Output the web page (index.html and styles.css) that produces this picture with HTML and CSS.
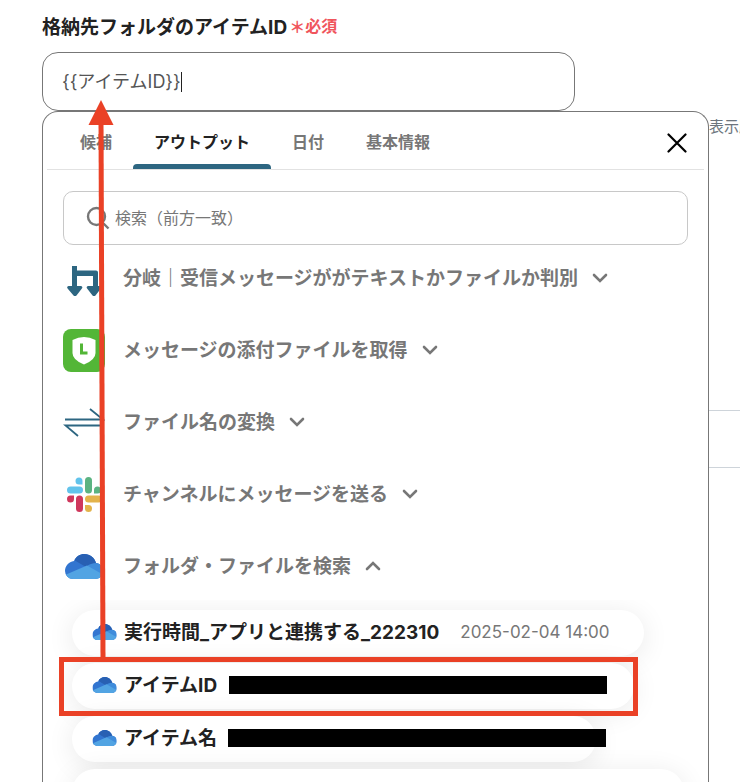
FILE: index.html
```html
<!DOCTYPE html>
<html lang="ja">
<head>
    <meta charset="UTF-8">
    <meta name="viewport" content="width=device-width, initial-scale=1.0">
    <title>格納先フォルダのアイテムID</title>
    <link rel="stylesheet" href="styles.css">
</head>
<body>

    <!-- Shared OneDrive cloud -->
    <svg class="defs" width="0" height="0" aria-hidden="true">
        <symbol id="onedrive" viewBox="0 0 38 25">
            <clipPath id="cloud">
                <path d="M8 25a8 8 0 0 1-8-8c0-5 3.500-9 9-10C11 2.500 15 0 19.500 0 25 0 29.500 3.500 31 9c4 .2 7 3.500 7 8 0 5-3.500 8-8 8z"/>
            </clipPath>
            <g clip-path="url(#cloud)">
                <rect width="38" height="25" fill="#3275d0"/>
                <path d="M9 6 12-1h20v11l-8 1-3 2z" fill="#2860b3"/>
                <path d="M21 13c3-3 7-4 10-4h8v13z" fill="#3f8cdb"/>
                <path d="M0 21 22 11.500 39 21v5H0z" fill="#52a4e3"/>
            </g>
        </symbol>
        <symbol id="chevron" viewBox="0 0 16 10">
            <path d="M2 2l6 6 6-6" fill="none" stroke="#777" stroke-width="2.600" stroke-linecap="round"/>
        </symbol>
    </svg>

    <main class="page">
        <div class="field-title">
            <label for="folderId">格納先フォルダのアイテムID</label>
            <span class="required"><span class="star">＊</span>必須</span>
        </div>
        <div class="field">
            <input type="text" id="folderId" value="{{アイテムID}}">
            <span class="caret"></span>
        </div>

        <div class="editor">
            <section class="picker">
                <header class="picker-head">
                    <nav class="tabs">
                        <button type="button" class="tab">候補</button>
                        <button type="button" class="tab active">アウトプット</button>
                        <button type="button" class="tab">日付</button>
                        <button type="button" class="tab">基本情報</button>
                    </nav>
                    <button type="button" class="close" aria-label="閉じる">
                        <svg width="20" height="20" viewBox="0 0 20 20"><path d="M1.500 1.500l17 17M18.500 1.500l-17 17" stroke="#000" stroke-width="2.200" stroke-linecap="round"/></svg>
                    </button>
                </header>

                <div class="search">
                    <svg width="24" height="24" viewBox="0 0 24 24" fill="none" stroke="#777" stroke-width="2.400"><circle cx="10.500" cy="10.500" r="8.500"/><path d="M16.500 16.500l6 6"/></svg>
                    <input type="search" aria-label="検索" placeholder="検索（前方一致）">
                </div>

                <div class="steps">
                    <button type="button" class="step">
                        <svg class="step-icon" viewBox="0 0 42 44" fill="#2d6681">
                            <path d="M9 10h5v4.500h19q2 0 2 2V30h2q2.500 1 .5 3l-5 6.500q-1.500 1-3 0l-5-6.500q-2-2 .5-3h5V20H14v10h4q2.500 1 .5 3l-5 6.500q-1.500 1-3 0L5 33q-2-2 .5-3H9z"/>
                        </svg>
                        <span class="step-name">分岐｜受信メッセージががテキストかファイルか判別</span>
                        <svg class="chevron"><use href="#chevron"/></svg>
                    </button>
                    <button type="button" class="step">
                        <svg class="step-icon" viewBox="0 0 42 44">
                            <rect y="1" width="42" height="43" rx="8" fill="#53b637"/>
                            <path d="M9.500 12Q21 6 32.500 12v13q0 7-11.500 11.500Q9.500 32 9.500 25z" fill="#fff"/>
                            <path d="M18.500 15.500v9.500h6" fill="none" stroke="#53b637" stroke-width="3"/>
                        </svg>
                        <span class="step-name">メッセージの添付ファイルを取得</span>
                        <svg class="chevron"><use href="#chevron"/></svg>
                    </button>
                    <button type="button" class="step">
                        <svg class="step-icon" viewBox="0 0 42 44" fill="none" stroke="#2d6681" stroke-width="1.800">
                            <path d="M2 19.500h38L27 9M40 25.500H2.500L15 36"/>
                        </svg>
                        <span class="step-name">ファイル名の変換</span>
                        <svg class="chevron"><use href="#chevron"/></svg>
                    </button>
                    <button type="button" class="step">
                        <svg class="step-icon" viewBox="0 0 42 44">
                            <g fill="#62c3eb"><path d="M19.500 12.500H16A3.500 3.500 0 1 1 19.500 9z"/><rect x="4" y="14.500" width="16" height="7" rx="3.500"/></g>
                            <g fill="#5bb381"><rect x="22" y="5" width="7" height="16.500" rx="3.500"/><path d="M31 21.500V18a3.500 3.500 0 1 1 3.500 3.500z"/></g>
                            <g fill="#e3b34b"><rect x="22" y="23.500" width="17" height="7" rx="3.500"/><path d="M22 33h3.500a3.500 3.500 0 1 1-3.500 3.500z"/></g>
                            <g fill="#cf375c"><path d="M11 23.500V27a3.500 3.500 0 1 1-3.500-3.500z"/><rect x="13" y="23.500" width="7" height="16.500" rx="3.500"/></g>
                        </svg>
                        <span class="step-name">チャンネルにメッセージを送る</span>
                        <svg class="chevron"><use href="#chevron"/></svg>
                    </button>
                    <button type="button" class="step" aria-expanded="true">
                        <svg class="step-icon" viewBox="0 0 42 44"><use href="#onedrive" x="2" y="10" width="38" height="25"/></svg>
                        <span class="step-name">フォルダ・ファイルを検索</span>
                        <svg class="chevron up"><use href="#chevron"/></svg>
                    </button>
                </div>

                <div class="outputs">
                    <button type="button" class="pill">
                        <svg class="cloud"><use href="#onedrive"/></svg>
                        <span class="name">実行時間_アプリと連携する_222310</span>
                        <span class="value">2025-02-04 14:00</span>
                    </button>
                    <button type="button" class="pill marked">
                        <svg class="cloud"><use href="#onedrive"/></svg>
                        <span class="name">アイテムID</span>
                        <span class="masked"></span>
                    </button>
                    <button type="button" class="pill short">
                        <svg class="cloud"><use href="#onedrive"/></svg>
                        <span class="name">アイテム名</span>
                        <span class="masked"></span>
                    </button>
                    <button type="button" class="pill last" aria-label="アイテム">
                        <svg class="cloud"><use href="#onedrive"/></svg>
                    </button>
                </div>
            </section>

            <aside class="side">
                <p>表示順</p>
                <div class="side-box"></div>
            </aside>
        </div>

        <!-- Red callout: marked item -> input -->
        <svg class="arrow" width="30" height="560" viewBox="0 0 30 560">
            <path d="M15 20 17 560" stroke="#ea4126" stroke-width="5"/>
            <path d="M15 0 27.500 25h-25z" fill="#ea4126"/>
        </svg>
        <div class="callout"></div>
    </main>

</body>
</html>
```
FILE: styles.css
```css
* {
    box-sizing: border-box;
}

body {
    margin: 0;
    height: 100vh;
    overflow: hidden;
    background: #fff;
    color: #222;
    font-family: Inter, "Noto Sans CJK JP", sans-serif;
    font-size: 19px;
}

button, input {
    font: inherit;
    color: inherit;
    border: none;
    background: none;
    padding: 0;
    margin: 0;
    outline: none;
}

.defs {
    position: absolute;
}

.page {
    position: relative;
    height: 100%;
    padding: 10px 0 0 42px;
    display: flex;
    flex-direction: column;
}

/* Field */
.field-title {
    display: flex;
    align-items: center;
    gap: 2px;
    height: 30px;
    font-weight: bold;
}

.required {
    display: flex;
    align-items: center;
    color: #f0555c;
    font-size: 16px;
}

.star {
    padding-top: 4px;
    line-height: 16px;
}

.field {
    display: flex;
    align-items: center;
    flex: none;
    height: 59px;
    margin-top: 12px;
    margin-right: 165px;
    padding: 0 19px;
    border: 1px solid #777;
    border-radius: 16px;
}

.field input {
    field-sizing: content;
    padding-bottom: 4px;
    color: #555;
    font-size: 18px;
}

.caret {
    width: 1px;
    height: 20px;
    background: #222;
}

/* Popup and what shows beside it */
.editor {
    flex: 1;
    min-height: 0;
    display: grid;
    grid-template-columns: minmax(0, 1fr) 31px;
}

.picker {
    min-height: 0;
    display: flex;
    flex-direction: column;
    border: 1px solid #777;
    border-bottom: none;
    border-radius: 16px 16px 0 0;
    background: #fff;
}

.picker-head {
    display: flex;
    flex: none;
    justify-content: space-between;
    align-items: center;
    height: 58px;
    margin: 0 4px;
    padding: 0 17px 0 12px;
    border-bottom: 1px solid #e2e2e2;
}

.tabs {
    display: flex;
    align-self: stretch;
}

.tab {
    padding: 5px 21px 0;
    border-bottom: 5px solid transparent;
    color: #777;
    font-size: 16px;
    font-weight: bold;
    white-space: nowrap;
    cursor: pointer;
}

.tab.active {
    position: relative;
    color: #222;
}

.tab.active::after {
    content: "";
    position: absolute;
    left: 0;
    right: 0;
    bottom: -5px;
    height: 5px;
    border-radius: 4px 4px 0 0;
    background: #2d6681;
}

.close {
    display: flex;
    padding-top: 4px;
    cursor: pointer;
}

.search {
    display: flex;
    flex: none;
    align-items: center;
    gap: 5px;
    height: 54px;
    margin: 21px 20px 0;
    padding: 0 22px;
    border: 1px solid #c8c8c8;
    border-radius: 10px;
}

.search input {
    flex: 1;
    font-size: 16px;
}

.search input::placeholder {
    color: #777;
}

/* Steps */
.steps {
    display: flex;
    flex: none;
    flex-direction: column;
    gap: 28px;
    margin: 11px 20px 0;
}

.step {
    display: flex;
    align-items: center;
    gap: 14px;
    height: 44px;
    color: #777;
    font-weight: bold;
    white-space: nowrap;
    cursor: pointer;
}

.step-icon {
    flex: none;
    width: 42px;
    height: 44px;
}

.step-name {
    padding: 0 0 3px 4px;
}

.chevron {
    flex: none;
    width: 16px;
    height: 10px;
}

.chevron.up {
    transform: rotate(180deg);
}

/* Outputs of the open step */
.outputs {
    display: flex;
    flex: 1;
    min-height: 0;
    flex-direction: column;
    align-items: flex-start;
    gap: 7px;
    margin-top: 12px;
    padding: 10px 23px 0 29px;
    overflow: hidden;
}

.pill {
    display: flex;
    flex: none;
    align-items: center;
    height: 46px;
    padding: 0 34px 2px 20px;
    border-radius: 23px;
    background: #fff;
    box-shadow: 0 4px 28px rgba(0, 0, 0, 0.09);
    white-space: nowrap;
    cursor: pointer;
}

.cloud {
    flex: none;
    width: 25px;
    height: 16px;
    margin-right: 7px;
}

.name {
    min-width: 92px;
    padding-bottom: 3px;
    text-align: left;
    font-weight: bold;
}

.value {
    margin-left: 21px;
    color: #777;
    font-size: 17px;
}

.masked {
    flex: none;
    width: 378px;
    height: 18px;
    margin-left: 12px;
    background: #000;
}

.pill.marked {
    padding-right: 27px;
}

.pill.short {
    width: 524px;
}

.pill.last {
    width: 612px;
}

.side {
    overflow: hidden;
}

.side p {
    margin: 4px 0 0;
    color: #6c757d;
    font-size: 15px;
    line-height: 24px;
    white-space: nowrap;
}

.side-box {
    height: 58px;
    margin-top: 271px;
    border: solid #ced4da;
    border-width: 1px 0;
}

/* Callout */
.arrow {
    position: absolute;
    left: 86px;
    top: 100px;
}

.callout {
    position: absolute;
    left: 59px;
    top: 657px;
    width: 579px;
    height: 59px;
    border: 5px solid #ea4126;
}
```
